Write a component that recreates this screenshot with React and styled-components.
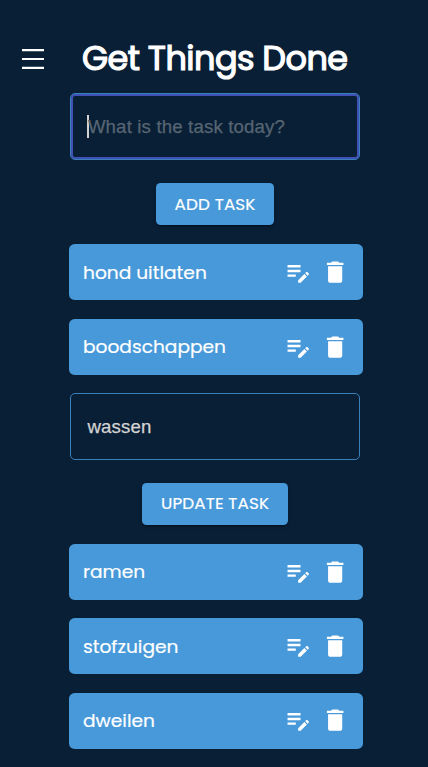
import React from 'react';
import styled, { createGlobalStyle } from 'styled-components';
import { MdDelete, MdEditNote } from 'react-icons/md';

const GlobalStyle = createGlobalStyle`
  * { box-sizing: border-box; }
  html, body { margin: 0; background: #091f36; overflow: hidden; }
`;

const Page = styled.main`
  height: 767px;
  overflow: hidden;
  background: #091f36;
  font-family: Poppins, Inter, sans-serif;
  color: #fff;
`;

const Header = styled.header`
  display: flex;
  align-items: center;
  height: 93px;
  padding: 26px 0 0 22px;
`;

const MenuButton = styled.button`
  display: flex;
  width: 60px;
  margin-top: -1px;
  padding: 0;
  border: 0;
  background: none;
  color: #fff;
`;

const Title = styled.h1`
  margin: -1px 0 0;
  font-size: 33.5px;
  line-height: 40px;
  font-weight: 400;
  letter-spacing: -0.54px;
  -webkit-text-stroke: 1.2px #fff;
  white-space: nowrap;
`;

const Form = styled.form`
  display: flex;
  flex-direction: column;
  align-items: center;
  gap: 23px;
  width: 289.4px;
  margin: 0 0 ${(p) => p.$after}px 70.4px;
`;

const Field = styled.div`
  display: flex;
  align-items: center;
  width: 100%;
  height: 67px;
  padding: ${(p) => (p.$focused ? '0 16px' : '2px 16px 0')};
  border: 1px solid #3a80bb;
  border-radius: 5px;
  box-shadow: ${(p) => (p.$focused ? 'inset 0 0 0 2px #3f51b5' : 'none')};
  font-family: "Liberation Sans", Arial, sans-serif;
  font-size: 18.6px;
  letter-spacing: 0.17px;
  color: ${(p) => (p.$focused ? '#576573' : '#d3d3d3')};
  -webkit-text-stroke: 0.25px currentColor;
  white-space: nowrap;
`;

const Caret = styled.span`
  width: 1.5px;
  height: 23px;
  margin-right: -1px;
  background: #d3d3d3;
`;

const Submit = styled.button`
  display: flex;
  align-items: center;
  justify-content: center;
  width: ${(p) => p.$width}px;
  height: 42.4px;
  padding: 0 0 ${(p) => p.$lift}px;
  border: 0;
  border-radius: 4.6px;
  background: #4899d9;
  box-shadow: 0 3px 1px -2px rgba(0, 0, 0, 0.2), 0 2px 2px rgba(0, 0, 0, 0.14),
    0 1px 5px rgba(0, 0, 0, 0.12);
  color: #fff;
  font-family: inherit;
  font-size: 16.8px;
  font-weight: 400;
  letter-spacing: 0.14px;
  -webkit-text-stroke: 0.2px currentColor;
  white-space: nowrap;
`;

const Tasks = styled.ul`
  display: flex;
  flex-direction: column;
  gap: 18.6px;
  width: 293.4px;
  margin: 0 0 18.4px 69.3px;
  padding: 0;
  list-style: none;
`;

const Task = styled.li`
  display: flex;
  align-items: center;
  height: 55.8px;
  padding: 0 13.8px 0 13.7px;
  border-radius: 5.6px;
  background: #4899d9;
`;

const TaskName = styled.span`
  flex: 1;
  font-size: 18.6px;
  -webkit-text-stroke: 0.2px currentColor;
  white-space: nowrap;
`;

const Actions = styled.div`
  display: flex;
  gap: 8.8px;

  svg {
    width: 28.3px;
    height: 28.3px;
  }
`;

function TaskRow({ name }) {
  return (
    <Task>
      <TaskName>{name}</TaskName>
      <Actions>
        <MdEditNote />
        <MdDelete />
      </Actions>
    </Task>
  );
}

export default function App() {
  return (
    <Page>
      <GlobalStyle />
      <Header>
        <MenuButton aria-label="Menu">
          <svg width="22" height="20" viewBox="0 0 22 20" fill="currentColor">
            <path d="M0 0h22v2.2H0zM0 8.9h22v2.2H0zM0 17.8h22V20H0z" />
          </svg>
        </MenuButton>
        <Title>Get Things Done</Title>
      </Header>
      <Form $after={19}>
        <Field $focused>
          <Caret />
          What is the task today?
        </Field>
        <Submit type="button" $width={118} $lift={1}>ADD TASK</Submit>
      </Form>
      <Tasks>
        <TaskRow name="hond uitlaten" />
        <TaskRow name="boodschappen" />
      </Tasks>
      <Form $after={18.6}>
        <Field>wassen</Field>
        <Submit type="button" $width={146} $lift={3}>UPDATE TASK</Submit>
      </Form>
      <Tasks>
        <TaskRow name="ramen" />
        <TaskRow name="stofzuigen" />
        <TaskRow name="dweilen" />
      </Tasks>
    </Page>
  );
}
